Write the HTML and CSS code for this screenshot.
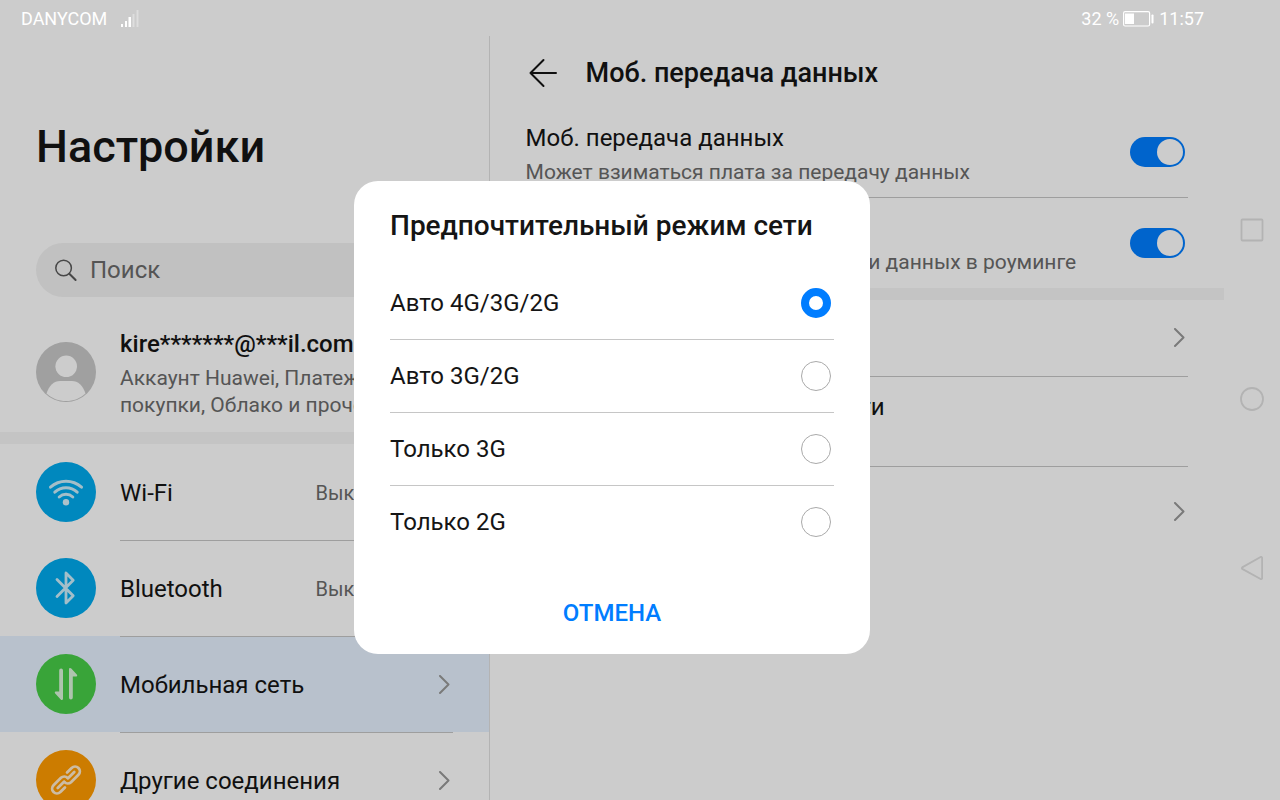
FILE: index.html
```html
<!DOCTYPE html>
<html lang="ru">
<head>
    <meta charset="UTF-8">
    <meta name="viewport" content="width=device-width, initial-scale=1.0">
    <title>Настройки</title>
    <link rel="stylesheet" href="styles.css">
</head>
<body>
    <!-- Icons used more than once -->
    <svg class="sprite" aria-hidden="true">
        <symbol id="chevron" viewBox="0 0 12 20">
            <path d="M2 1 10.500 9.500 2 18" fill="none" stroke="currentColor" stroke-width="2" stroke-linecap="round" stroke-linejoin="round"/>
        </symbol>
    </svg>

    <header class="status-bar">
        <div class="status-group">
            <span>DANYCOM</span>
            <svg class="signal" viewBox="0 0 18 18" width="18" height="18" fill="#fff" aria-hidden="true">
                <path d="M0 14h2v3H0zM4 11h2v6H4zM7.500 7h2.500v10H7.500z"/>
                <path d="M11.500 4h2v13h-2zM15.500 0h2v17h-2z" opacity=".35"/>
            </svg>
        </div>
        <div class="status-group status-right">
            <span>32 %</span>
            <svg viewBox="0 0 32 16" width="32" height="16" aria-hidden="true">
                <rect x=".6" y=".6" width="26" height="14.400" rx="1.500" fill="none" stroke="#fff" stroke-width="1.200"/>
                <rect x="2" y="2.500" width="9" height="10.500" fill="#fff"/>
                <rect x="28.500" y="3.500" width="2" height="9" rx=".8" fill="#fff"/>
            </svg>
            <span>11:57</span>
        </div>
    </header>

    <div class="screen">
        <aside class="sidebar">
            <h1 class="sidebar-title">Настройки</h1>

            <label class="search">
                <svg viewBox="0 0 24 24" width="24" height="24" fill="none" stroke="#595959" aria-hidden="true">
                    <circle cx="9.600" cy="10" r="7.800" stroke-width="1.500"/>
                    <path d="m15.300 15.700 6.300 6.300" stroke-width="2" stroke-linecap="round"/>
                </svg>
                <input type="search" placeholder="Поиск" aria-label="Поиск">
            </label>

            <a href="#account" class="account">
                <svg class="avatar" viewBox="0 0 60 60" aria-hidden="true">
                    <circle cx="30" cy="30" r="30" fill="#c8c8c8"/>
                    <circle cx="30.200" cy="24.300" r="10.800" fill="#fff"/>
                    <path d="M10.500 51.500C13 43.500 18 39 24 39h12c6 0 11 4.500 13.500 12.500C44 56.500 37.500 59 30 59s-14-2.500-19.500-7.500z" fill="#fff"/>
                </svg>
                <span class="account-text">
                    <span class="account-name">kire*******@***il.com</span>
                    <span class="account-info">Аккаунт Huawei, Платежи и покупки, Облако и прочее</span>
                </span>
            </a>

            <nav class="menu">
                <a href="#wifi" class="menu-item">
                    <svg class="menu-icon" viewBox="0 0 60 60" aria-hidden="true">
                        <circle cx="30" cy="30" r="30" fill="#00abee"/>
                        <g fill="none" stroke="#fff" stroke-width="3" stroke-linecap="round" opacity=".8">
                            <path d="M14.500 25.200a23 23 0 0 1 31 0"/>
                            <path d="M18.800 30.200a16.500 16.500 0 0 1 22.400 0"/>
                            <path d="M23.200 35a10 10 0 0 1 13.600 0"/>
                        </g>
                        <circle cx="30" cy="40.200" r="3.200" fill="#fff" opacity=".85"/>
                    </svg>
                    <span class="menu-body">
                        <span class="menu-label">Wi-Fi</span>
                        <span class="menu-value">Выключено</span>
                        <svg class="chevron"><use href="#chevron"/></svg>
                    </span>
                </a>
                <a href="#bluetooth" class="menu-item">
                    <svg class="menu-icon" viewBox="0 0 60 60" aria-hidden="true">
                        <circle cx="30" cy="30" r="30" fill="#00abee"/>
                        <path d="M21 21.500 37.200 37.800 30 45V15l7.200 7.200L21 38.500" fill="none" stroke="#fff" stroke-width="2.800" stroke-linecap="round" stroke-linejoin="round" opacity=".8"/>
                    </svg>
                    <span class="menu-body">
                        <span class="menu-label">Bluetooth</span>
                        <span class="menu-value">Выключено</span>
                        <svg class="chevron"><use href="#chevron"/></svg>
                    </span>
                </a>
                <a href="#mobile" class="menu-item active" aria-current="page">
                    <svg class="menu-icon" viewBox="0 0 60 60" aria-hidden="true">
                        <circle cx="30" cy="30" r="30" fill="#48ce48"/>
                        <g fill="#fff" opacity=".8">
                            <path d="M23.200 16.500a1.900 1.900 0 0 1 3.800 0V44.500c0 1.600-1.300 1.900-2.300.9l-5.500-5.900c-.8-1-.3-2 .8-2h3.200z"/>
                            <path d="M36.800 43.500a1.900 1.900 0 0 1-3.800 0V15.500c0-1.600 1.300-1.900 2.300-.9l5.500 5.900c.8 1 .3 2-.8 2h-3.200z"/>
                        </g>
                    </svg>
                    <span class="menu-body">
                        <span class="menu-label">Мобильная сеть</span>
                        <svg class="chevron"><use href="#chevron"/></svg>
                    </span>
                </a>
                <a href="#connections" class="menu-item">
                    <svg class="menu-icon" viewBox="0 0 60 60" aria-hidden="true">
                        <circle cx="30" cy="30" r="30" fill="#ff9b00"/>
                        <g transform="rotate(-45 30 30)" fill="none" stroke="#fff" stroke-width="2.800" stroke-linecap="round" opacity=".8">
                            <path d="M24 34.500H17.500a4.800 4.800 0 0 1 0-9.600H28a4.800 4.800 0 0 1 4.600 4.800"/>
                            <path d="M36 25.500h6.500a4.800 4.800 0 0 1 0 9.600H32a4.800 4.800 0 0 1-4.600-4.800"/>
                            <path d="M18.500 29.800h8.900M32.600 30.200h8.900"/>
                        </g>
                    </svg>
                    <span class="menu-body">
                        <span class="menu-label">Другие соединения</span>
                        <svg class="chevron"><use href="#chevron"/></svg>
                    </span>
                </a>
            </nav>
        </aside>

        <main class="content">
            <div class="content-header">
                <button type="button" class="back-button" aria-label="Назад">
                    <svg viewBox="0 0 30 30" width="30" height="30" fill="none" stroke="#151515" stroke-width="2" stroke-linecap="round" stroke-linejoin="round">
                        <path d="M28 15H2.500M15.500 2l-13 13 13 13"/>
                    </svg>
                </button>
                <h2 class="content-title">Моб. передача данных</h2>
            </div>

            <div class="group">
                <label class="setting">
                    <span class="setting-text">
                        <span class="setting-label">Моб. передача данных</span>
                        <span class="setting-info">Может взиматься плата за передачу данных</span>
                    </span>
                    <input type="checkbox" role="switch" class="switch" checked>
                </label>
                <label class="setting">
                    <span class="setting-text">
                        <span class="setting-label">Интернет-роуминг</span>
                        <span class="setting-info">Подключаться к службам передачи данных в роуминге</span>
                    </span>
                    <input type="checkbox" role="switch" class="switch" checked>
                </label>
            </div>

            <div class="group">
                <a href="#apn" class="setting setting-short">
                    <span class="setting-label">Точка доступа (APN)</span>
                    <svg class="chevron"><use href="#chevron"/></svg>
                </a>
                <a href="#mode" class="setting">
                    <span class="setting-text">
                        <span class="setting-label">Предпочтительный режим сети</span>
                        <span class="setting-info">Авто 4G/3G/2G</span>
                    </span>
                </a>
                <a href="#operator" class="setting">
                    <span class="setting-label">Оператор связи</span>
                    <svg class="chevron"><use href="#chevron"/></svg>
                </a>
            </div>
        </main>

        <nav class="system-nav" aria-label="Навигация">
            <button type="button" aria-label="Недавние">
                <svg viewBox="0 0 24 24" fill="none" stroke="currentColor" stroke-width="1.800"><rect x="1.500" y="1.500" width="21" height="21" rx="1"/></svg>
            </button>
            <button type="button" aria-label="Домой">
                <svg viewBox="0 0 24 24" fill="none" stroke="currentColor" stroke-width="1.800"><circle cx="12" cy="12" r="11"/></svg>
            </button>
            <button type="button" aria-label="Назад">
                <svg viewBox="0 0 24 24" fill="none" stroke="currentColor" stroke-width="1.800" stroke-linejoin="round"><path d="M2.200 11.400a1 1 0 0 0 0 1.500L20.600 23a1 1 0 0 0 1.500-.8V1.800a1 1 0 0 0-1.500-.8z"/></svg>
            </button>
        </nav>
    </div>

    <div class="overlay">
        <form class="dialog" role="dialog" aria-modal="true" aria-labelledby="dialog_title">
            <h2 class="dialog-title" id="dialog_title">Предпочтительный режим сети</h2>
            <div class="options">
                <label class="option">
                    <span>Авто 4G/3G/2G</span>
                    <input type="radio" name="mode" class="radio" checked>
                </label>
                <label class="option">
                    <span>Авто 3G/2G</span>
                    <input type="radio" name="mode" class="radio">
                </label>
                <label class="option">
                    <span>Только 3G</span>
                    <input type="radio" name="mode" class="radio">
                </label>
                <label class="option">
                    <span>Только 2G</span>
                    <input type="radio" name="mode" class="radio">
                </label>
            </div>
            <button type="button" class="cancel-button">ОТМЕНА</button>
        </form>
    </div>
</body>
</html>
```

FILE: styles.css
```css
:root {
    --primary-color: #007dff;
    --text-color: #151515;
    --muted-color: #6b6b6b;
    --line-color: #c6c6c6;
    --band-color: #f5f5f5;
    --active-color: #e6f2ff;
    --white: #fff;
    --status-height: 36px;
    --nav-width: 56px;
}

* {
    box-sizing: border-box;
}

body {
    margin: 0;
    height: 100vh;
    overflow: hidden;
    font-family: Roboto, "Noto Sans", sans-serif;
    font-size: 24px;
    line-height: 32px;
    color: var(--text-color);
    background-color: var(--white);
}

a {
    color: inherit;
    text-decoration: none;
}

button {
    padding: 0;
    border: none;
    background: none;
    font: inherit;
    cursor: pointer;
}

h1, h2 {
    margin: 0;
    font-weight: 500;
}

.sprite {
    display: none;
}

.chevron {
    flex: none;
    width: 12px;
    height: 20px;
    margin-right: 3px;
    color: #999;
}

/* Status bar stays bright above the dimmed screen */
.status-bar {
    position: absolute;
    top: 0;
    left: 0;
    right: 0;
    z-index: 3;
    display: flex;
    justify-content: space-between;
    height: var(--status-height);
    padding: 0 76px 0 21px;
    font-size: 18px;
    color: var(--white);
}

.status-group {
    display: flex;
    align-items: center;
    gap: 14px;
    padding-top: 2px;
}

.status-right {
    gap: 4px;
}

/* Screen */
.screen {
    display: grid;
    grid-template-columns: 2fr 3fr var(--nav-width);
    height: 100%;
}

.sidebar, .content {
    min-width: 0;
    margin-top: var(--status-height);
    overflow: hidden;
}

.sidebar {
    border-right: 1px solid #e0e0e0;
}

.sidebar-title {
    padding: 81px 36px 66px;
    font-size: 45px;
    line-height: 60px;
}

.search {
    display: flex;
    align-items: center;
    gap: 12px;
    height: 54px;
    margin: 0 36px;
    padding: 0 18px;
    border-radius: 27px;
    background-color: #f2f2f2;
}

.search input {
    flex: 1;
    min-width: 0;
    padding: 0;
    border: none;
    outline: none;
    background: none;
    font: inherit;
}

.search input::placeholder {
    color: var(--muted-color);
}

.account {
    display: flex;
    align-items: flex-start;
    gap: 24px;
    padding: 31px 36px 13px;
    border-bottom: 12px solid var(--band-color);
}

.avatar, .menu-icon {
    flex: none;
    width: 60px;
    height: 60px;
}

.avatar {
    margin-top: 14px;
}

.account-text {
    display: flex;
    flex-direction: column;
    gap: 5px;
}

.account-name {
    font-weight: 500;
}

.account-info {
    font-size: 21px;
    line-height: 27px;
    color: var(--muted-color);
}

.menu-item {
    display: flex;
    align-items: center;
    gap: 24px;
    height: 96px;
    padding: 0 36px;
}

.menu-item.active {
    background-color: var(--active-color);
}

.menu-body {
    display: flex;
    flex: 1;
    align-items: center;
    gap: 8px;
    height: 100%;
    border-top: 1px solid var(--line-color);
}

.menu-item:first-child .menu-body {
    border-top-color: transparent;
}

.menu-label {
    flex: 1;
}

.menu-value {
    font-size: 20px;
    color: var(--muted-color);
}

.menu-value + .chevron {
    margin-left: 3px;
}

/* Right pane */
.content-header {
    display: flex;
    align-items: center;
    gap: 28px;
    height: 71px;
    padding: 2px 38px 0;
}

.back-button {
    display: flex;
}

.content-title {
    font-size: 27px;
}

.group {
    padding: 0 36px 1px;
}

.group + .group {
    border-top: 12px solid var(--band-color);
}

.setting {
    display: flex;
    align-items: center;
    justify-content: space-between;
    height: 90px;
}

.setting-short {
    height: 76px;
}

.setting + .setting {
    border-top: 1px solid var(--line-color);
}

.setting-text {
    display: flex;
    flex-direction: column;
    gap: 4px;
    padding-top: 3px;
}

.setting-info {
    font-size: 21px;
    line-height: 28px;
    color: var(--muted-color);
}

.switch {
    appearance: none;
    display: flex;
    flex: none;
    width: 55px;
    height: 30px;
    margin: 0 3px 0 0;
    padding: 2px;
    border-radius: 15px;
    background-color: #ccc;
}

.switch::before {
    content: "";
    width: 26px;
    height: 26px;
    border-radius: 50%;
    background-color: var(--white);
}

.switch:checked {
    justify-content: flex-end;
    background-color: var(--primary-color);
}

.system-nav {
    display: flex;
    flex-direction: column;
    align-items: center;
    justify-content: center;
    gap: 145px;
    padding-bottom: 2px;
}

.system-nav button {
    display: flex;
    width: 24px;
    height: 24px;
    color: #e0e0e0;
}

/* Dialog */
.overlay {
    position: absolute;
    inset: 0;
    z-index: 2;
    display: flex;
    align-items: center;
    justify-content: center;
    padding: 35px var(--nav-width) 0 0;
    background-color: rgba(0, 0, 0, 0.2);
}

.dialog {
    display: flex;
    flex-direction: column;
    width: 516px;
    padding: 25px 36px 17px;
    border-radius: 24px;
    background-color: var(--white);
}

.dialog-title {
    margin-bottom: 20px;
    font-size: 28px;
    line-height: 40px;
}

.option {
    display: flex;
    align-items: center;
    justify-content: space-between;
    height: 73px;
}

.option + .option {
    border-top: 1px solid var(--line-color);
}

.radio {
    appearance: none;
    width: 30px;
    height: 30px;
    margin: 0 3px 0 0;
    border: 1px solid #aaa;
    border-radius: 50%;
    background-color: var(--white);
}

.radio:checked {
    border: 8px solid var(--primary-color);
}

.cancel-button {
    align-self: center;
    height: 48px;
    margin-top: 31px;
    padding: 0 24px;
    font-weight: 500;
    color: var(--primary-color);
}
```
